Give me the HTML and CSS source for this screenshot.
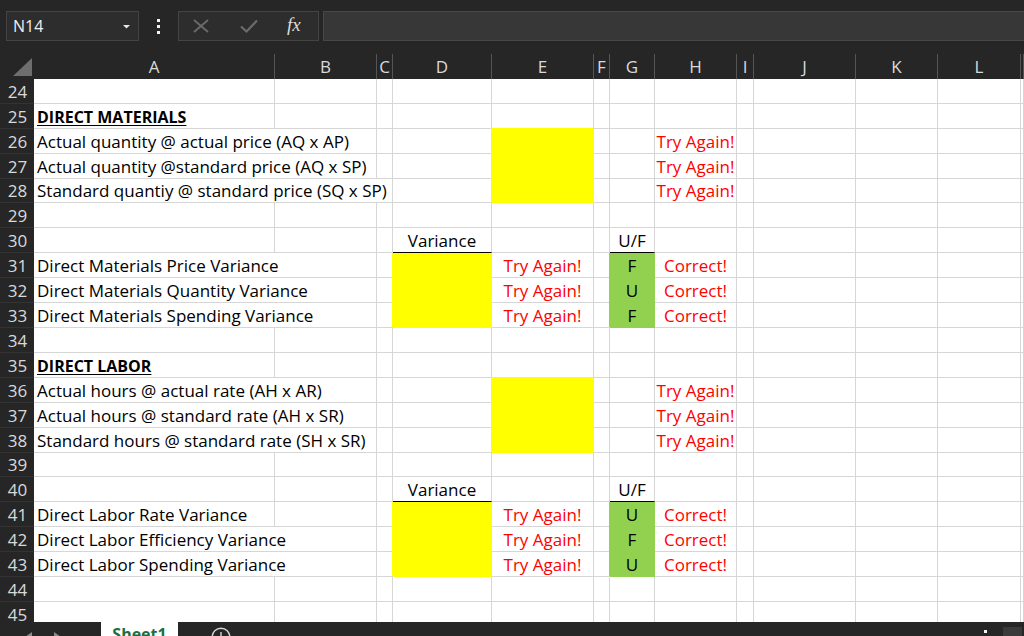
FILE: index.html
```html
<!DOCTYPE html>
<html>
<head>
<meta charset="utf-8">
<link rel="stylesheet" href="styles.css">
</head>
<body>
<div class="app">
  <div class="toolbar">
    <div class="namebox">
      <span class="nb-text">N14</span>
      <svg class="caret" width="7" height="4" viewBox="0 0 7 4"><path d="M0 0H7L3.5 3.5Z" fill="#e6e6e6"/></svg>
    </div>
    <div class="vdots"><span class="dot"></span><span class="dot"></span><span class="dot"></span></div>
    <div class="fbtns">
      <svg class="ico-x" width="16" height="14" viewBox="0 0 16 14"><path d="M1 1L15 13M15 1L1 13" stroke="#6b6b6b" stroke-width="1.8" fill="none"/></svg>
      <svg class="ico-ok" width="18" height="14" viewBox="0 0 18 14"><path d="M1 7.5L6.5 12.5L17 1.5" stroke="#6b6b6b" stroke-width="2.2" fill="none"/></svg>
      <span class="fx">fx</span>
    </div>
    <div class="finput"></div>
  </div>

  <div class="sheet">
    <div class="row hdr">
      <span class="corner"><svg width="19" height="18" viewBox="0 0 19 18"><path d="M19 0V18H0Z" fill="#6e6e6e"/></svg></span>
      <span>A</span><span>B</span><span>C</span><span>D</span><span>E</span><span>F</span><span>G</span><span>H</span><span>I</span><span>J</span><span>K</span><span>L</span><span></span>
    </div>

    <div class="row"><span class="rh">24</span><span></span><span></span><span></span><span></span><span></span><span></span><span></span><span></span><span></span><span></span><span></span><span></span><span></span></div>
    <div class="row"><span class="rh">25</span><span class="lbl head">DIRECT MATERIALS</span><span></span><span></span><span></span><span></span><span></span><span></span><span></span><span></span><span></span><span></span><span></span><span></span></div>
    <div class="row"><span class="rh">26</span><span class="lbl s2">Actual quantity @ actual price (AQ x AP)</span><span></span><span></span><span class="yl"></span><span></span><span></span><span class="red">Try Again!</span><span></span><span></span><span></span><span></span><span></span></div>
    <div class="row"><span class="rh">27</span><span class="lbl s2">Actual quantity @standard price (AQ x SP)</span><span></span><span></span><span class="yl"></span><span></span><span></span><span class="red">Try Again!</span><span></span><span></span><span></span><span></span><span></span></div>
    <div class="row short"><span class="rh">28</span><span class="lbl s3">Standard quantiy @ standard price (SQ x SP)</span><span></span><span class="yl"></span><span></span><span></span><span class="red">Try Again!</span><span></span><span></span><span></span><span></span><span></span></div>
    <div class="row"><span class="rh">29</span><span></span><span></span><span></span><span></span><span></span><span></span><span></span><span></span><span></span><span></span><span></span><span></span><span></span></div>
    <div class="row"><span class="rh">30</span><span></span><span></span><span></span><span class="ctr ul">Variance</span><span></span><span></span><span class="ctr ul">U/F</span><span></span><span></span><span></span><span></span><span></span><span></span></div>
    <div class="row"><span class="rh">31</span><span class="lbl s2">Direct Materials Price Variance</span><span></span><span class="yl first"></span><span class="red">Try Again!</span><span></span><span class="gr first">F</span><span class="red">Correct!</span><span></span><span></span><span></span><span></span><span></span></div>
    <div class="row"><span class="rh">32</span><span class="lbl s2">Direct Materials Quantity Variance</span><span></span><span class="yl"></span><span class="red">Try Again!</span><span></span><span class="gr">U</span><span class="red">Correct!</span><span></span><span></span><span></span><span></span><span></span></div>
    <div class="row"><span class="rh">33</span><span class="lbl s2">Direct Materials Spending Variance</span><span></span><span class="yl"></span><span class="red">Try Again!</span><span></span><span class="gr">F</span><span class="red">Correct!</span><span></span><span></span><span></span><span></span><span></span></div>
    <div class="row"><span class="rh">34</span><span></span><span></span><span></span><span></span><span></span><span></span><span></span><span></span><span></span><span></span><span></span><span></span><span></span></div>
    <div class="row"><span class="rh">35</span><span class="lbl head">DIRECT LABOR</span><span></span><span></span><span></span><span></span><span></span><span></span><span></span><span></span><span></span><span></span><span></span><span></span></div>
    <div class="row"><span class="rh">36</span><span class="lbl s2">Actual hours @ actual rate (AH x AR)</span><span></span><span></span><span class="yl"></span><span></span><span></span><span class="red">Try Again!</span><span></span><span></span><span></span><span></span><span></span></div>
    <div class="row"><span class="rh">37</span><span class="lbl s2">Actual hours @ standard rate (AH x SR)</span><span></span><span></span><span class="yl"></span><span></span><span></span><span class="red">Try Again!</span><span></span><span></span><span></span><span></span><span></span></div>
    <div class="row"><span class="rh">38</span><span class="lbl s2">Standard hours @ standard rate (SH x SR)</span><span></span><span></span><span class="yl"></span><span></span><span></span><span class="red">Try Again!</span><span></span><span></span><span></span><span></span><span></span></div>
    <div class="row short"><span class="rh">39</span><span></span><span></span><span></span><span></span><span></span><span></span><span></span><span></span><span></span><span></span><span></span><span></span><span></span></div>
    <div class="row"><span class="rh">40</span><span></span><span></span><span></span><span class="ctr ul">Variance</span><span></span><span></span><span class="ctr ul">U/F</span><span></span><span></span><span></span><span></span><span></span><span></span></div>
    <div class="row"><span class="rh">41</span><span class="lbl">Direct Labor Rate Variance</span><span></span><span></span><span class="yl first"></span><span class="red">Try Again!</span><span></span><span class="gr first">U</span><span class="red">Correct!</span><span></span><span></span><span></span><span></span><span></span></div>
    <div class="row"><span class="rh">42</span><span class="lbl s2">Direct Labor Efficiency Variance</span><span></span><span class="yl"></span><span class="red">Try Again!</span><span></span><span class="gr">F</span><span class="red">Correct!</span><span></span><span></span><span></span><span></span><span></span></div>
    <div class="row"><span class="rh">43</span><span class="lbl s2">Direct Labor Spending Variance</span><span></span><span class="yl"></span><span class="red">Try Again!</span><span></span><span class="gr">U</span><span class="red">Correct!</span><span></span><span></span><span></span><span></span><span></span></div>
    <div class="row"><span class="rh">44</span><span></span><span></span><span></span><span></span><span></span><span></span><span></span><span></span><span></span><span></span><span></span><span></span><span></span></div>
    <div class="row"><span class="rh">45</span><span></span><span></span><span></span><span></span><span></span><span></span><span></span><span></span><span></span><span></span><span></span><span></span><span></span></div>
  </div>

  <div class="footer">
    <div class="nav">
      <svg class="arr" width="7" height="10" viewBox="0 0 7 10"><path d="M7 0V10L0 5Z" fill="#8a8a8a"/></svg>
      <svg class="arr" width="7" height="10" viewBox="0 0 7 10"><path d="M0 0V10L7 5Z" fill="#8a8a8a"/></svg>
    </div>
    <div class="tab">Sheet1</div>
    <svg class="plus" width="20" height="20" viewBox="0 0 20 20"><circle cx="10" cy="10" r="8.8" stroke="#d6d6d6" stroke-width="1.4" fill="none"/><path d="M10 5V15M5 10H15" stroke="#d6d6d6" stroke-width="1.4"/></svg>
    <div class="spacer"></div>
    <div class="fdots"><span class="fdot"></span></div>
    <div class="resize"><svg width="19" height="10" viewBox="0 0 19 10"><path d="M15 3V10H8Z" fill="#8c8c8c"/></svg></div>
  </div>
</div>
</body>
</html>
```

FILE: styles.css
```css
* { box-sizing: border-box; margin: 0; padding: 0; }

html, body {
  width: 1024px;
  height: 636px;
  overflow: hidden;
  background: #262626;
}

body {
  font-family: "Open Sans", "Noto Sans", sans-serif;
  font-size: 17px;
  color: #000;
}

.app {
  display: flex;
  flex-direction: column;
  height: 636px;
}

/* ---------- toolbar ---------- */
.toolbar {
  height: 54px;
  flex: none;
  display: flex;
  align-items: flex-start;
  padding-top: 11px;
  background: #262626;
}

.namebox {
  margin-left: 6px;
  width: 133px;
  height: 30px;
  background: #2d2d2d;
  border: 1px solid #444;
  display: flex;
  align-items: center;
  padding-left: 6px;
  padding-right: 8px;
  color: #efefef;
}

.nb-text { flex: 1; font-size: 16px; }
.caret { margin-top: 1px; }

.vdots {
  width: 39px;
  height: 30px;
  display: flex;
  flex-direction: column;
  align-items: center;
  justify-content: center;
  gap: 3px;
}

.dot {
  width: 3px;
  height: 3px;
  background: #f2f2f2;
}

.fbtns {
  width: 141px;
  height: 30px;
  background: #2d2d2d;
  border: 1px solid #444;
  display: flex;
  align-items: center;
  padding-left: 14px;
}

.ico-x { margin-right: 31px; }
.ico-ok { margin-right: 29px; }

.fx {
  font-family: "Liberation Serif", "DejaVu Serif", serif;
  font-style: italic;
  font-size: 19px;
  color: #dcdcdc;
  margin-top: -2px;
}

.finput {
  margin-left: 4px;
  flex: 1;
  height: 30px;
  background: #373737;
  border: 1px solid #474747;
  border-right: none;
}

/* ---------- sheet ---------- */
.sheet {
  flex: 1;
  background: #fff;
  overflow: hidden;
}

.row {
  display: grid;
  grid-template-columns: 34px 241px 102px 16px 99px 102px 16px 45px 82px 17px 102px 82px 83px 1fr;
  height: 25px;
}

.row.short { height: 24px; }

.row > span {
  border-right: 1px solid #d6d6d6;
  border-bottom: 1px solid #d6d6d6;
  display: flex;
  align-items: flex-end;
  justify-content: center;
  white-space: nowrap;
  line-height: 20px;
  padding-bottom: 1px;
}

.row > span.rh {
  background: #262626;
  color: #d9d9d9;
  border-right: none;
  border-bottom: 1px solid #333;
  padding-left: 1px;
}

.row.hdr {
  height: 25px;
  background: #262626;
}

.row.hdr > span {
  border-right: 1px solid #555;
  border-bottom: none;
  color: #dadada;
  padding-bottom: 2px;
}

.row.hdr > span.corner {
  border-right: none;
  align-items: flex-end;
  justify-content: flex-end;
  padding: 0 2px 3px 0;
}

.row > span.lbl {
  justify-content: flex-start;
  padding-left: 3px;
}

.row > span.s2 { grid-column: span 2; }
.row > span.s3 { grid-column: span 3; }

.row > span.head {
  font-size: 16px;
  font-weight: 700;
  text-decoration: underline;
  text-underline-offset: 2px;
}

.row > span.ul { border-bottom: 1px solid #000; }

.row > span.red { color: #ff0000; }

.row > span.yl {
  background: #ffff00;
  border-color: #ffff00;
  box-shadow: -1px -1px 0 0 #ffff00;
}

.row > span.gr {
  background: #92d050;
  border-color: #92d050;
  box-shadow: -1px -1px 0 0 #92d050;
}

.row > span.yl.first { box-shadow: -1px 0 0 0 #ffff00; }
.row > span.gr.first { box-shadow: -1px 0 0 0 #92d050; }

/* ---------- footer ---------- */
.footer {
  height: 14px;
  flex: none;
  display: flex;
  align-items: flex-start;
  overflow: hidden;
  background: #262626;
}

.nav {
  width: 101px;
  display: flex;
  padding-left: 25px;
  padding-top: 10px;
  gap: 22px;
}

.tab {
  width: 77px;
  height: 30px;
  background: #fff;
  color: #1d7044;
  font-weight: 700;
  font-size: 16px;
  line-height: 20px;
  text-align: center;
  padding-top: 2px;
}

.plus {
  margin-left: 33px;
  margin-top: 5px;
}

.spacer { flex: 1; }

.fdots {
  width: 4px;
  padding-top: 8px;
  margin-right: 15px;
}

.fdot {
  display: block;
  width: 3px;
  height: 3px;
  background: #f2f2f2;
}

.resize {
  width: 19px;
  height: 14px;
  margin-top: 5px;
  margin-right: 2px;
  background: #3a3a3a;
}
```
